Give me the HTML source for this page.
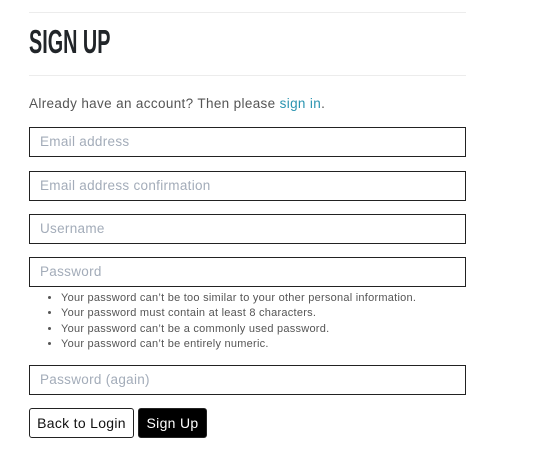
<!DOCTYPE html><html><head><style>
body{margin:0;background:#fff;font-family:"Liberation Sans",sans-serif;width:546px;height:464px;position:relative;overflow:hidden}
.hr{position:absolute;left:29px;width:437px;height:1px;background:#ececec}
h1{position:absolute;left:29px;top:23px;margin:0;font-size:33px;font-weight:bold;color:#212529;font-family:"Liberation Sans",sans-serif;transform:scaleX(.6);transform-origin:left;white-space:nowrap}
.p{position:absolute;left:29px;top:96px;font-size:13.5px;color:#555;letter-spacing:.35px}
.p a{color:#2a94b0;text-decoration:none}
.in{position:absolute;left:29px;width:435px;height:28px;border:1px solid #222;font-size:13.5px;color:#a3acb9;line-height:28px;text-indent:10px;letter-spacing:.3px}
ul{position:absolute;left:38px;top:291px;margin:0;padding:0 0 0 23px;font-size:11px;color:#555;line-height:15.3px;letter-spacing:.25px;white-space:nowrap}
.b{position:absolute;top:408px;height:28px;line-height:28px;border:1px solid #222;border-radius:3px;font-size:14px;text-align:center;letter-spacing:.3px}
</style></head><body>
<div class="hr" style="top:12px"></div>
<h1>SIGN UP</h1>
<div class="hr" style="top:75px"></div>
<div class="p">Already have an account? Then please <a>sign in</a>.</div>
<div class="in" style="top:127px">Email address</div>
<div class="in" style="top:171px">Email address confirmation</div>
<div class="in" style="top:214px">Username</div>
<div class="in" style="top:257px">Password</div>
<ul><li>Your password can’t be too similar to your other personal information.</li><li>Your password must contain at least 8 characters.</li><li>Your password can’t be a commonly used password.</li><li>Your password can’t be entirely numeric.</li></ul>
<div class="in" style="top:365px">Password (again)</div>
<div class="b" style="left:29px;width:103px;background:#fff;color:#111">Back to Login</div>
<div class="b" style="left:138px;width:67px;background:#000;color:#fff">Sign Up</div>
</body></html>
